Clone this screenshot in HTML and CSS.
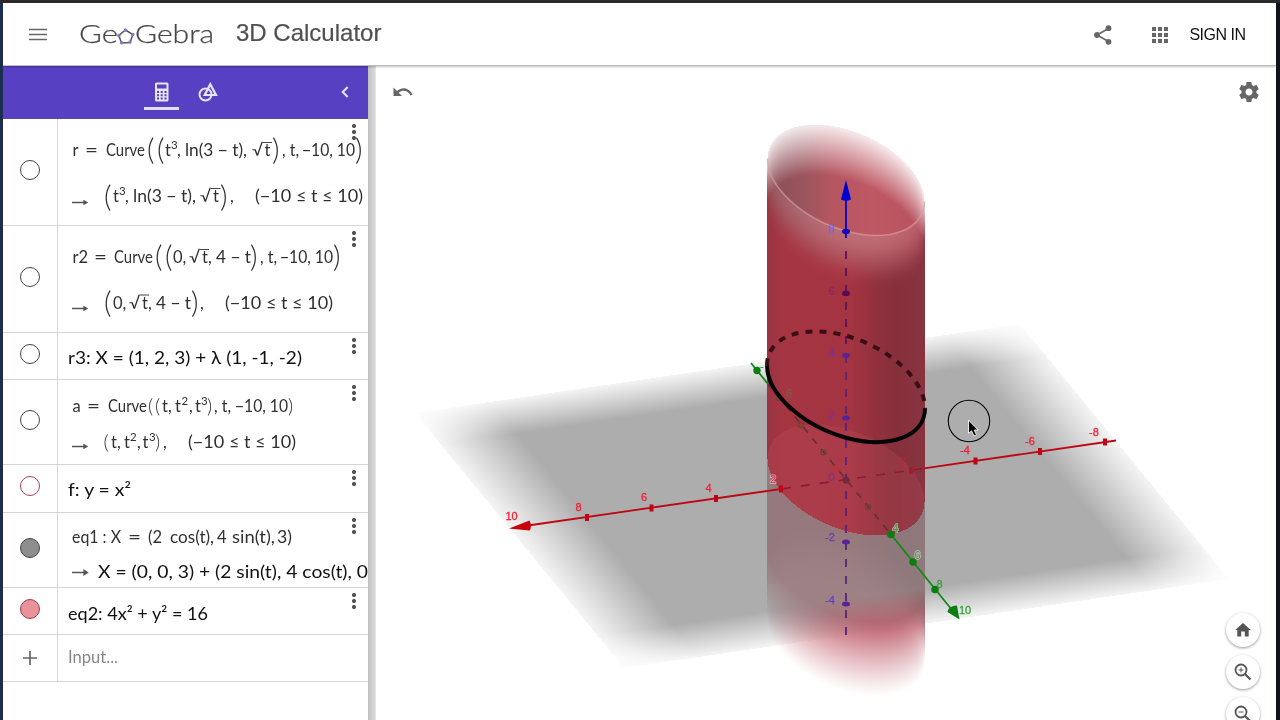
FILE: index.html
```html
<!DOCTYPE html>
<html lang="en">
<head>
<meta charset="utf-8">
<title>GeoGebra 3D Calculator</title>
<link rel="stylesheet" href="styles.css">
</head>
<body>
<div class="window">
  <header class="topbar">
    <svg class="menu-icon" width="18" height="13" viewBox="0 0 18 13"><path d="M0 1.5H18M0 6.5H18M0 11.5H18"/></svg>
    <svg class="logo" width="136" height="30" viewBox="79 20 136 30">
      <g class="logo-text">
        <text x="79" y="43" textLength="39" lengthAdjust="spacingAndGlyphs">Ge</text>
        <text x="135" y="43" textLength="79" lengthAdjust="spacingAndGlyphs">Gebra</text>
      </g>
      <path class="logo-ring" d="M125.500 30L132.800 34.500L130 42.500L121.500 43L118.800 35.500Z"/>
      <g class="logo-dots"><circle cx="125.500" cy="30" r="1.700"/><circle cx="132.800" cy="34.500" r="1.700"/><circle cx="130" cy="42" r="1.700"/><circle cx="121.500" cy="42.700" r="1.700"/><circle cx="118.900" cy="35.500" r="1.700"/></g>
    </svg>
    <h1 class="title">3D Calculator</h1>
    <nav class="actions">
      <svg class="share" width="18" height="20" viewBox="0 0 18 20"><path d="M14.500 3.500L3 10L14.500 16.500" fill="none" stroke="#666" stroke-width="1.600"/><circle cx="14.500" cy="3.200" r="2.900"/><circle cx="3" cy="10" r="2.900"/><circle cx="14.500" cy="16.800" r="2.900"/></svg>
      <svg class="grid" width="16" height="16" viewBox="0 0 16 16"><path d="M0 0h4v4H0zM6 0h4v4H6zM12 0h4v4h-4zM0 6h4v4H0zM6 6h4v4H6zM12 6h4v4h-4zM0 12h4v4H0zM6 12h4v4H6zM12 12h4v4h-4z"/></svg>
      <span class="signin">SIGN IN</span>
    </nav>
  </header>

  <div class="work">
    <aside class="sidebar">
      <div class="tabs">
        <div class="tab active">
          <svg width="16" height="20" viewBox="0 0 16 20"><path fill-rule="evenodd" d="M2.500 0.500h10.500a1.500 1.500 0 0 1 1.500 1.500v16a1.500 1.500 0 0 1-1.500 1.500H2.500A1.500 1.500 0 0 1 1 18V2A1.500 1.500 0 0 1 2.500 0.500zM3 2.500v4h9.500v-4zM3 9v2h2V9zM6.700 9v2h2V9zM10.500 9v2h2V9zM3 12.300v2h2v-2zM6.700 12.300v2h2v-2zM10.500 12.300v2h2v-2zM3 15.600v2h2v-2zM6.700 15.600v2h2v-2zM10.500 15.600v2h2v-2z"/></svg>
        </div>
        <div class="tab">
          <svg width="22" height="20" viewBox="0 0 22 20"><g fill="none" stroke="#e9e4fa" stroke-width="2"><circle cx="8.500" cy="12.500" r="6"/><path d="M13.300 2.200L19 13H7.700Z" stroke-width="2.200"/></g></svg>
        </div>
        <svg class="collapse" width="8" height="12" viewBox="0 0 8 12"><path d="M6.700 1L1.700 6l5 5"/></svg>
      </div>

      <div class="row tall">
        <div class="mark"><i class="dot"></i></div>
        <svg class="formula" viewBox="58 119 310 106">
          <g class="tex">
            <text x="72.500" y="156">r</text><text x="85" y="156" textLength="13" lengthAdjust="spacingAndGlyphs">=</text>
            <text x="106" y="156" textLength="39" lengthAdjust="spacingAndGlyphs">Curve</text>
            <text class="big" x="147" y="160">(</text><text class="big" x="157" y="160">(</text>
            <text x="165" y="156">t</text><text class="sup" x="171" y="149">3</text><text x="177" y="156">,</text>
            <text x="185" y="156" textLength="62" lengthAdjust="spacingAndGlyphs">ln(3 − t),</text>
            <text x="252" y="156" textLength="11" lengthAdjust="spacingAndGlyphs">√</text><text x="264.500" y="156">t</text>
            <text class="big" x="272" y="160">)</text><text x="282" y="156" textLength="17" lengthAdjust="spacingAndGlyphs">, t,</text>
            <text x="302" y="156" textLength="53" lengthAdjust="spacingAndGlyphs">−10, 10</text><text class="big" x="355" y="160">)</text>
            <text class="big" x="104" y="206.500">(</text><text x="113" y="202">t</text><text class="sup" x="119" y="195">3</text><text x="125" y="202">,</text>
            <text x="133" y="202" textLength="63" lengthAdjust="spacingAndGlyphs">ln(3 − t),</text>
            <text x="200" y="202" textLength="11" lengthAdjust="spacingAndGlyphs">√</text><text x="213" y="202">t</text>
            <text class="big" x="220" y="206.500">)</text><text x="230" y="202">,</text>
            <text x="255" y="202" textLength="108" lengthAdjust="spacingAndGlyphs">(−10 ≤ t ≤ 10)</text>
          </g>
          <path class="rule" d="M262.500 142.500H272M211 188.500H220.500"/>
          <path class="arrow" d="M72 202.500H86M84 200.800l3 1.700l-3 1.700z"/>
        </svg>
        <i class="more"></i>
      </div>

      <div class="row tall">
        <div class="mark"><i class="dot"></i></div>
        <svg class="formula" viewBox="58 226 310 106">
          <g class="tex">
            <text x="72.500" y="262.500">r2</text><text x="94" y="262.500" textLength="13" lengthAdjust="spacingAndGlyphs">=</text>
            <text x="114" y="262.500" textLength="39" lengthAdjust="spacingAndGlyphs">Curve</text>
            <text class="big" x="155" y="267">(</text><text class="big" x="165" y="267">(</text>
            <text x="173" y="262.500">0,</text><text x="189" y="262.500" textLength="11" lengthAdjust="spacingAndGlyphs">√</text><text x="202" y="262.500">t</text><text x="208" y="262.500">,</text>
            <text x="216" y="262.500" textLength="35" lengthAdjust="spacingAndGlyphs">4 − t</text><text class="big" x="250" y="267">)</text>
            <text x="260" y="262.500" textLength="17" lengthAdjust="spacingAndGlyphs">, t,</text>
            <text x="280" y="262.500" textLength="53" lengthAdjust="spacingAndGlyphs">−10, 10</text><text class="big" x="333" y="267">)</text>
            <text class="big" x="104" y="313">(</text><text x="113" y="308.500">0,</text><text x="129" y="308.500" textLength="11" lengthAdjust="spacingAndGlyphs">√</text><text x="142" y="308.500">t</text><text x="148" y="308.500">,</text>
            <text x="156" y="308.500" textLength="35" lengthAdjust="spacingAndGlyphs">4 − t</text><text class="big" x="191" y="313">)</text><text x="200" y="308.500">,</text>
            <text x="225" y="308.500" textLength="108" lengthAdjust="spacingAndGlyphs">(−10 ≤ t ≤ 10)</text>
          </g>
          <path class="rule" d="M199.500 249.500H209M139.500 295H149"/>
          <path class="arrow" d="M72 308.500H86M84 306.800l3 1.700l-3 1.700z"/>
        </svg>
        <i class="more"></i>
      </div>

      <div class="row short">
        <div class="mark"><i class="dot"></i></div>
        <svg class="formula" viewBox="58 333 310 46"><text class="plain" x="68" y="363.500" textLength="234" lengthAdjust="spacingAndGlyphs">r3: X = (1, 2, 3) + λ (1, -1, -2)</text></svg>
        <i class="more"></i>
      </div>

      <div class="row medium">
        <div class="mark"><i class="dot"></i></div>
        <svg class="formula" viewBox="58 380 310 84">
          <g class="tex">
            <text x="72.500" y="412">a</text><text x="87" y="412" textLength="13" lengthAdjust="spacingAndGlyphs">=</text>
            <text x="108" y="412" textLength="39" lengthAdjust="spacingAndGlyphs">Curve</text>
            <text class="mid" x="148" y="413">(</text><text class="mid" x="155" y="413">(</text><text x="162" y="412">t,</text>
            <text x="175" y="412">t</text><text class="sup" x="181.500" y="405">2</text><text x="189" y="412">,</text><text x="195" y="412">t</text><text class="sup" x="201" y="405">3</text>
            <text class="mid" x="207" y="413">)</text><text x="214" y="412" textLength="17" lengthAdjust="spacingAndGlyphs">, t,</text>
            <text x="235" y="412" textLength="53" lengthAdjust="spacingAndGlyphs">−10, 10</text><text class="mid" x="288" y="413">)</text>
            <text class="mid" x="103.500" y="448.500">(</text><text x="111" y="447.500">t,</text><text x="124" y="447.500">t</text><text class="sup" x="130" y="440.500">2</text><text x="137" y="447.500">,</text>
            <text x="142.500" y="447.500">t</text><text class="sup" x="149" y="440.500">3</text><text class="mid" x="155" y="448.500">)</text><text x="163" y="447.500">,</text>
            <text x="188" y="447.500" textLength="108" lengthAdjust="spacingAndGlyphs">(−10 ≤ t ≤ 10)</text>
          </g>
          <path class="arrow" d="M72 446.500H86M84 444.800l3 1.700l-3 1.700z"/>
        </svg>
        <i class="more"></i>
      </div>

      <div class="row short extra">
        <div class="mark"><i class="dot crimson"></i></div>
        <svg class="formula" viewBox="58 465 310 47"><text class="plain" x="68" y="496" textLength="63" lengthAdjust="spacingAndGlyphs">f: y = x²</text></svg>
        <i class="more"></i>
      </div>

      <div class="row eq">
        <div class="mark"><i class="dot grey"></i></div>
        <svg class="formula" viewBox="58 513 310 74">
          <g class="tex">
            <text x="72" y="542.500" textLength="49" lengthAdjust="spacingAndGlyphs">eq1 : X</text><text x="128" y="542.500" textLength="13" lengthAdjust="spacingAndGlyphs">=</text>
            <text x="148" y="542.500">(2</text><text x="170" y="542.500" textLength="44" lengthAdjust="spacingAndGlyphs">cos(t),</text><text x="217" y="542.500">4</text>
            <text x="232" y="542.500" textLength="43" lengthAdjust="spacingAndGlyphs">sin(t),</text><text x="277" y="542.500" textLength="15" lengthAdjust="spacingAndGlyphs">3)</text>
          </g>
          <path class="arrow" d="M72 572.500H86M84 570.300l3.500 2.200l-3.500 2.200z"/>
          <text class="plain" x="98" y="577.500" textLength="270" lengthAdjust="spacingAndGlyphs">X = (0, 0, 3) + (2 sin(t), 4 cos(t), 0</text>
        </svg>
        <i class="more"></i>
      </div>

      <div class="row short">
        <div class="mark"><i class="dot pink"></i></div>
        <svg class="formula" viewBox="58 588 310 46"><text class="plain" x="68" y="619.500" textLength="140" lengthAdjust="spacingAndGlyphs">eq2: 4x² + y² = 16</text></svg>
        <i class="more"></i>
      </div>

      <div class="row short">
        <div class="mark"><svg width="14" height="14" viewBox="0 0 14 14"><path d="M7 0V14M0 7H14" stroke="#666" stroke-width="1.700"/></svg></div>
        <svg class="formula" viewBox="58 635 310 46"><text class="plain hint" x="68" y="663" textLength="50" lengthAdjust="spacingAndGlyphs">Input...</text></svg>
      </div>
    </aside>

    <main class="view">
      <canvas id="surface" class="layer" width="900" height="654"></canvas>
      <svg class="layer" width="900" height="654" viewBox="376 66 900 654">
        <g class="axis-y">
          <path d="M751 363L768 384M891 534.500L952 610"/>
          <path class="hidden-y" d="M768 384L891 534.500"/>
          <path class="fill" d="M959.500 619.500L947.500 612Q948 606 957 605.500Z"/>
          <g class="fill"><circle cx="757" cy="370.500" r="3.700"/><circle cx="891" cy="534.500" r="3.800"/><circle cx="913" cy="562" r="3.800"/><circle cx="935" cy="589.500" r="3.800"/></g>
          <g class="ghost"><circle cx="779" cy="398" r="2.500"/><circle cx="801" cy="425" r="2.500"/><circle cx="823.500" cy="452.500" r="2.500"/><circle cx="846" cy="480" r="2.500"/><circle cx="868" cy="507" r="2.500"/></g>
        </g>
        <g class="axis-x">
          <path d="M528 525.500L781 489M924 468.300L1116 440.500"/>
          <path class="hidden-x" d="M781 489L924 468.300"/>
          <path class="fill" d="M509 528.500L529.500 520.500Q532 525 530 530.500Z"/>
          <g class="ticks"><path d="M587 514v7M651.500 504.500v7M716 495v7M781 485.500v7M975.500 457.500v7M1040 448v7M1105 438.500v7"/><path class="dim" d="M911 467v7"/></g>
        </g>
        <path class="rim" transform="matrix(78.500 21.500 0 51 846 180)" d="M-1 0A1 1 0 0 0 1 0"/>
        <g class="axis-z">
          <path class="blue" d="M846 196V238"/><path class="blue fill" d="M846 180L851 199.500Q846 202 841 199.500Z"/>
          <path class="dash" d="M846 251V355"/><path class="dash low" d="M846 355V644"/>
          <ellipse class="t8" cx="846" cy="231.500" rx="4" ry="2.700"/><ellipse class="t6" cx="846" cy="293.500" rx="4" ry="2.700"/>
          <g class="tl"><ellipse cx="846" cy="355.500" rx="4" ry="2.500"/><ellipse cx="846" cy="418" rx="4" ry="2.500"/><ellipse cx="846" cy="542" rx="4" ry="2.500"/><ellipse cx="846" cy="604" rx="4" ry="2.500"/></g>
          <circle cx="846" cy="480" r="3.500" fill="#702a3c"/>
        </g>
        <g class="labels red"><text x="505.500" y="520">10</text><text x="575.500" y="510.500">8</text><text x="641" y="501">6</text><text x="705.500" y="492">4</text><text class="halo" x="770" y="482.500">2</text><text class="faint" x="896" y="465">-2</text><text class="faint" x="834" y="474">0</text><text x="960" y="454">-4</text><text x="1025" y="445">-6</text><text x="1089" y="435.500">-8</text></g>
        <g class="labels green"><text class="halo" x="892.500" y="532">4</text><text class="halo" x="914.500" y="559">6</text><text x="936.500" y="587.500">8</text><text x="959" y="614">10</text><text x="760" y="370">-</text><text class="faint" x="786" y="397">6</text></g>
        <g class="labels"><text class="z8" x="828.500" y="232.500">8</text><text class="z6" x="828.500" y="295">6</text><text class="z4" x="828.500" y="356.500">4</text><text class="z4" x="828.500" y="419">2</text><text class="z4" x="828.500" y="480.500">0</text><text class="z2" x="825" y="541">-2</text><text class="z2" x="825" y="604">-4</text></g>
        <g class="curve" transform="matrix(79 21.500 0 51 846 386.700)">
          <path class="back" d="M-1 0A1 1 0 0 1 1 0"/><path d="M-1 0A1 1 0 0 0 1 0"/>
        </g>
        <circle cx="969" cy="421" r="20.700" fill="none" stroke="#000" stroke-width="1.100"/>
        <path d="M968.500 420V433.500L971.500 430.800L974 436L976.500 434.800L974.200 430H978.200Z" fill="#000" stroke="#eee" stroke-width="1"/>
      </svg>
      <div class="tools">
        <svg class="undo" width="20" height="14" viewBox="0 0 20 14"><path d="M0.500 2.500V11H9L5.700 7.700C10 4.300 15 5.500 17.600 10.500L19.500 9.700C16.500 3 9.500 1.200 4 6Z"/></svg>
        <svg class="gear" width="22" height="22" viewBox="1 1 22 22"><path d="M19.430 12.980c.04-.32.07-.64.07-.98s-.03-.66-.07-.98l2.110-1.650c.19-.15.24-.42.12-.64l-2-3.460c-.12-.22-.39-.3-.61-.22l-2.490 1c-.52-.4-1.080-.73-1.690-.98l-.38-2.650C14.460 2.180 14.250 2 14 2h-4c-.25 0-.46.18-.49.42l-.38 2.650c-.61.25-1.170.59-1.690.98l-2.490-1c-.23-.09-.49 0-.61.22l-2 3.460c-.13.22-.07.49.12.64l2.110 1.650c-.04.32-.07.65-.07.98s.03.66.07.98l-2.110 1.650c-.19.15-.24.42-.12.64l2 3.460c.12.22.39.3.61.22l2.490-1c.52.4 1.080.73 1.690.98l.38 2.650c.03.24.24.42.49.42h4c.25 0 .46-.18.49-.42l.38-2.650c.61-.25 1.170-.59 1.690-.98l2.490 1c.23.09.49 0 .61-.22l2-3.460c.12-.22.07-.49-.12-.64l-2.110-1.650zM12 15.500c-1.930 0-3.500-1.570-3.500-3.500s1.570-3.500 3.500-3.500 3.500 1.570 3.500 3.500-1.570 3.500-3.500 3.500z"/></svg>
      </div>
      <div class="zoomers">
        <button class="round"><svg width="18" height="18" viewBox="0 0 18 18"><path d="M7.200 15.500V10.500H10.800V15.500H14.700V9H16.800L9 2L1.200 9H3.300V15.500Z"/></svg></button>
        <button class="round"><svg width="18" height="18" viewBox="0 0 18 18"><g class="lens"><circle cx="7" cy="7" r="5.500"/><path d="M11 11L16.500 16.500" stroke-width="2.200"/><path d="M7 4.500V9.500M4.500 7H9.500" stroke-width="1"/></g></svg></button>
        <button class="round"><svg width="18" height="18" viewBox="0 0 18 18"><g class="lens"><circle cx="7" cy="7" r="5.500"/><path d="M11 11L16.500 16.500" stroke-width="2.200"/><path d="M4.500 7H9.500" stroke-width="1"/></g></svg></button>
      </div>
    </main>
  </div>
</div>
<script src="scene.js"></script>
</body>
</html>
```

FILE: styles.css
```css
* { box-sizing: border-box; }
body { margin: 0; height: 720px; overflow: hidden; padding: 3px 4px 0 3px; background: linear-gradient(#2a2a2a 0 3px, transparent 3px), linear-gradient(90deg, #1d2d50 0 50%, #10121c 50%); font-family: "Liberation Sans", Arial, sans-serif; }
.window { height: 717px; background: #fff; display: flex; flex-direction: column; overflow: hidden; }
.topbar { flex: none; height: 63px; display: flex; align-items: center; padding: 0 30.5px 0 26px; border-bottom: 1px solid #bdbdbd; box-shadow: 0 1px 2px rgba(0,0,0,.25); position: relative; z-index: 3; background: #fff; }
.menu-icon { fill: none; stroke: #666; stroke-width: 1.7; }
.logo { margin-left: 32px; margin-top: 2px; }
.logo-text { font: 300 25px Lato, sans-serif; fill: #484848; stroke: #484848; stroke-width: .25px; }
.logo-ring { fill: none; stroke: #555; stroke-width: 1.5; }
.logo-dots { fill: #8078c8; }
.title { margin: 0 0 2px 21px; font-size: 24px; font-weight: 400; color: #505050; line-height: 30px; -webkit-text-stroke: .2px #505050; }
.actions { margin-left: auto; display: flex; align-items: center; fill: #666; padding-top: 1px; }
.share { margin-right: 40px; }
.grid { margin-right: 21px; }
.signin { font-size: 16px; letter-spacing: -.5px; color: #111; line-height: 20px; }
.work { flex: 1; display: flex; min-height: 0; background: linear-gradient(90deg, transparent 365px, #c2c2c2 365px, #dadada 372px, transparent 374px); }
.sidebar { width: 365px; flex: none; position: relative; z-index: 2; background: #fff; }
.tabs { height: 53px; background: #5740c2; display: flex; justify-content: center; position: relative; padding-right: 2px; gap: 11px; border-bottom: 1px solid #5a4a9c; }
.tab { width: 35px; height: 44px; padding-top: 16px; text-align: center; fill: #e9e4fa; }
.tab svg { display: block; margin: 0 auto; }
.tab.active { border-bottom: 3px solid #e4defa; }
.collapse { position: absolute; right: 19px; top: 20px; fill: none; stroke: #e9e4fa; stroke-width: 2; }
.row { display: flex; position: relative; border-bottom: 1px solid #d5d5d5; }
.tall { height: 107px; }
.short { height: 47px; }
.extra { height: 48px; }
.medium { height: 85px; }
.eq { height: 75px; }
.mark { width: 55px; flex: none; border-right: 1px solid #d5d5d5; display: flex; align-items: center; justify-content: center; padding: 0 1px 4px 0; }
.short .mark { padding-bottom: 5px; }
.short:last-child .mark { padding-bottom: 1px; }
.dot { width: 20px; height: 20px; border-radius: 50%; border: 1.4px solid #444; }
.crimson { border-color: #a8405a; }
.grey { background: #8e8e8e; }
.pink { background: #e8929c; border-color: #a03a4c; }
.formula { width: 310px; height: 100%; display: block; }
.tex { font: 16.5px Lato, "Noto Sans", sans-serif; fill: #303030; }
.tex .sup { font-size: 11.5px; }
.tex .big { font-size: 29px; font-weight: 300; }
.tex .mid { font-size: 20px; font-weight: 300; }
.rule { stroke: #444; stroke-width: 1; }
.arrow { stroke: #555; stroke-width: 1.3; fill: #555; }
.plain { font: 17.5px Lato, "Noto Sans", sans-serif; fill: #111; }
.hint { fill: #888; }
.more { position: absolute; right: 12px; top: 5px; width: 4px; height: 17px; background: radial-gradient(circle at 2px 2px, #555 1.8px, transparent 2.3px) 0 0 / 4px 6px repeat-y; }
.view { flex: 1; margin-left: 8px; position: relative; min-width: 0; overflow: hidden; }
.layer { position: absolute; left: 0; top: 0; }
.tools { position: absolute; left: 17px; right: 16px; top: 15px; display: flex; justify-content: space-between; align-items: center; fill: #666; }
.zoomers { position: absolute; right: 16px; top: 547px; display: flex; flex-direction: column; gap: 8px; }
.round { width: 34px; height: 34px; padding: 0; border: 0; border-radius: 50%; background: #fff; box-shadow: 0 1px 3px rgba(0,0,0,.4); display: flex; align-items: center; justify-content: center; fill: #555; flex: none; }
.lens { fill: none; stroke: #555; stroke-width: 1.8; }
.axis-x, .axis-y, .axis-z { fill: none; stroke-width: 1.8; }
.axis-x { stroke: #bd0713; }
.axis-x .fill { fill: #c8000a; stroke: none; }
.ticks { stroke-width: 4; }
.dim { stroke: #a01c30; }
.hidden-x { stroke: #8f1a2c; stroke-width: 1.6; stroke-dasharray: 9 10; stroke-dashoffset: -1; }
.axis-y { stroke: #128a18; }
.axis-y .fill { fill: #0b7d12; stroke: none; }
.hidden-y { stroke: #633034; stroke-width: 1.6; stroke-dasharray: 7 7; }
.ghost { stroke: #744034; stroke-width: 1.6; }
.blue { stroke: #0a06c0; }
.axis-z .fill { fill: #0000d0; stroke: none; }
.dash { stroke: #5c1258; stroke-dasharray: 8 9; }
.low { stroke: #5a2278; }
.t8 { fill: #1208b8; }
.t6 { fill: #5c0854; }
.tl { fill: #572399; }
.labels { font: 11px "Liberation Sans", Arial, sans-serif; stroke-width: .3px; }
.red { fill: #f21f36; stroke: #f21f36; }
.green { fill: #36a33b; stroke: #36a33b; }
.z8 { fill: #5548ff; stroke: #8d80f0; }
.z6 { fill: #8c2470; stroke: #8c2470; }
.z4 { fill: #80309c; stroke: #80309c; }
.z2 { fill: #6440b8; stroke: #6440b8; }
.faint { opacity: .35; }
.halo { paint-order: stroke; stroke: rgba(255,255,255,.5); stroke-width: 1.5px; }
.rim { fill: none; stroke: rgba(214,158,164,.65); stroke-width: 1.6; vector-effect: non-scaling-stroke; }
.curve path { fill: none; stroke: #050505; stroke-width: 4; vector-effect: non-scaling-stroke; }
.curve .back { stroke: #3a0d15; stroke-dasharray: 7 7; }
```

FILE: scene.js
```javascript
// Shades the xOy plane and the elliptic cylinder 4x² + y² = 16 pixel by pixel.
const canvas = document.getElementById('surface');
const ctx = canvas.getContext('2d');
const W = canvas.width, H = canvas.height, OX = 376, OY = 66;
const img = ctx.createImageData(W, H);
const CX = 846, RX = 78.5, SKEW = 21.5, RY = 51;
const TOP = 180, BASE = 480, BOTTOM = 642;

const clamp = t => Math.max(0, Math.min(1, t));
const smooth = t => { t = clamp(t); return t * t * (3 - 2 * t); };
const mix = (a, b, t) => a.map((v, i) => v + (b[i] - v) * t);

function ramp(stops, x) {
  for (let i = 1; i < stops.length; i++) {
    if (x <= stops[i][0]) {
      const [x0, c0] = stops[i - 1], [x1, c1] = stops[i];
      return mix(c0, c1, clamp((x - x0) / (x1 - x0)));
    }
  }
  return stops[stops.length - 1][1];
}
const outer = [[768, [156, 52, 66]], [785, [166, 53, 66]], [850, [164, 52, 65]], [875, [146, 49, 61]], [895, [134, 48, 59]], [924, [136, 52, 64]]];
const inner = [[768, [140, 78, 88]], [800, [152, 84, 92]], [830, [180, 86, 97]], [870, [190, 88, 99]], [924, [184, 82, 94]]];

for (let py = 0; py < H; py++) {
  for (let px = 0; px < W; px++) {
    const x = px + OX + 0.5, y = py + OY + 0.5;
    let c = [255, 255, 255];
    const k = (x - CX) / RX;
    const inside = Math.abs(k) <= 1;
    const s = inside ? Math.sqrt(1 - k * k) : 0;
    const mid = SKEW * k, dip = RY * s;

    if (inside && y > BASE + mid + dip) {
      const front = Math.pow(clamp((BOTTOM + mid + dip - y) / 75), 1.2);
      const back = smooth((BOTTOM + mid - dip - y) / 65);
      const a = 1 - (1 - 0.85 * front) * (1 - 0.7 * back);
      c = mix(c, mix([190, 68, 84], ramp(outer, x), 0.25 + 0.75 * back), a);
    }

    // Position inside the plane's parallelogram, in units of its two sides.
    const dx = x - 415, dy = y - 413, det = 605 * 255 + 89 * 209;
    const u = (dx * 255 - dy * 209) / det, v = (605 * dy + 89 * dx) / det;
    if (u > 0 && u < 1 && v > 0 && v < 1) {
      const fu = clamp(Math.min(u, 1 - u) / 0.125), fv = clamp(Math.min(v, 1 - v) / 0.125);
      c = mix(c, [143, 143, 143], 0.73 * (0.13 + 0.87 * fu) * (0.13 + 0.87 * fv));
    }

    if (inside && y <= BASE + mid + dip && y >= TOP + mid - dip) {
      const rim = TOP + mid + dip;
      const depth = clamp((y - (TOP + mid - dip)) / 50);
      c = mix(c, ramp(inner, x), 0.12 + 0.88 * depth);
      if (y > rim) {
        const t = smooth((y - rim) / 55);
        c = mix(mix(c, [190, 122, 130], 0.6 * s), ramp(outer, x), t);
      }
      if (y > BASE + mid - dip) c = mix(c, [200, 88, 102], 0.2);
    }
    const i = (py * W + px) * 4;
    img.data[i] = c[0]; img.data[i + 1] = c[1]; img.data[i + 2] = c[2]; img.data[i + 3] = 255;
  }
}
ctx.putImageData(img, 0, 0);
```
